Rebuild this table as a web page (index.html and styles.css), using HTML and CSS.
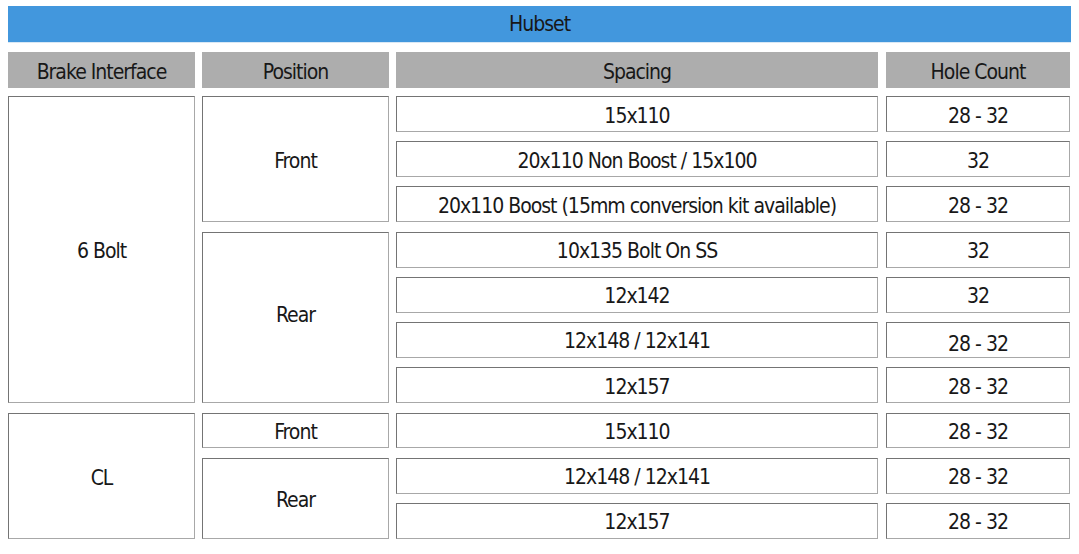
FILE: index.html
```html
<!DOCTYPE html>
<html>
<head>
<meta charset="utf-8">
<link rel="stylesheet" href="styles.css">
<title>Hubset</title>
</head>
<body>
<div class="hubset">
  <div class="title">Hubset</div>
  <div class="head">
    <div class="hcell">Brake Interface</div>
    <div class="hcell">Position</div>
    <div class="hcell">Spacing</div>
    <div class="hcell">Hole Count</div>
  </div>
  <div class="grid">
    <div class="cell c1 span7">6 Bolt</div>
    <div class="cell c2 span3">Front</div>
    <div class="cell c3">15x110</div>
    <div class="cell c4">28 - 32</div>
    <div class="cell c3">20x110 Non Boost / 15x100</div>
    <div class="cell c4">32</div>
    <div class="cell c3">20x110 Boost (15mm conversion kit available)</div>
    <div class="cell c4">28 - 32</div>
    <div class="cell c2 span4 rear">Rear</div>
    <div class="cell c3">10x135 Bolt On SS</div>
    <div class="cell c4">32</div>
    <div class="cell c3">12x142</div>
    <div class="cell c4">32</div>
    <div class="cell c3">12x148 / 12x141</div>
    <div class="cell c4 low">28 - 32</div>
    <div class="cell c3">12x157</div>
    <div class="cell c4">28 - 32</div>

    <div class="cell c1 span3 gapTop">CL</div>
    <div class="cell c2 gapTop">Front</div>
    <div class="cell c3 gapTop">15x110</div>
    <div class="cell c4 gapTop">28 - 32</div>
    <div class="cell c2 span2">Rear</div>
    <div class="cell c3">12x148 / 12x141</div>
    <div class="cell c4">28 - 32</div>
    <div class="cell c3">12x157</div>
    <div class="cell c4">28 - 32</div>
  </div>
</div>
</body>
</html>
```

FILE: styles.css
```css
html, body {
  background: #ffffff;
}
body {
  margin: 6px 8px 0 8px;
  font-family: "DejaVu Sans Condensed", "Liberation Sans", sans-serif;
  color: #181818;
  font-size: 21px;
  letter-spacing: -1px;
}
.hubset {
  display: flex;
  flex-direction: column;
  width: 1063px;
}
.title {
  height: 36px;
  background: #4297dd;
  border-bottom: 1px solid #d9e8f5;
  display: flex;
  align-items: center;
  justify-content: center;
  margin-bottom: 9px;
}
.head,
.grid {
  display: grid;
  grid-template-columns: 187px 187px 482px 185px;
  column-gap: 7px;
}
.head {
  margin-bottom: 8px;
}
.head .hcell {
  height: 36px;
  padding-top: 3px;
  box-sizing: border-box;
  background: #adadad;
  display: flex;
  align-items: center;
  justify-content: center;
}
.head .hcell:nth-child(4) {
  margin-left: 1px;
}
.grid {
  grid-auto-rows: 36px;
  row-gap: 9.2px;
}
.cell {
  box-sizing: border-box;
  border: 1px solid;
  border-color: #747474 #a8a8a8 #a8a8a8 #747474;
  padding-top: 3px;
  display: flex;
  align-items: center;
  justify-content: center;
  text-align: center;
}
.c1 { grid-column: 1; }
.c2 { grid-column: 2; }
.c3 { grid-column: 3; }
.c4 { grid-column: 4; margin-left: 1px; }
.span2 { grid-row: span 2; }
.span3 { grid-row: span 3; }
.span4 { grid-row: span 4; }
.span7 { grid-row: span 7; }
.rear { padding-bottom: 8px; }
.low { padding-top: 8px; }
.gapTop { margin-top: 1px; }
```
